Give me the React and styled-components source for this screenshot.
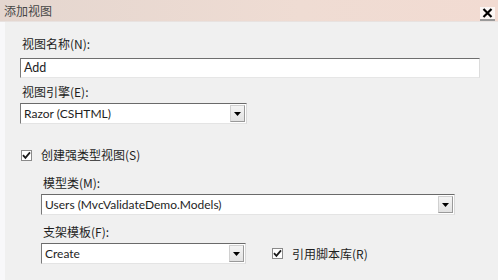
import React from "react";
import styled, { createGlobalStyle } from "styled-components";

const GlobalStyle = createGlobalStyle`
  html, body {
    margin: 0;
    padding: 0;
    background: #f0f0f0;
  }
  body {
    font-family: "Noto Sans CJK SC", "Noto Sans", sans-serif;
    font-size: 12px;
    color: #1e1e1e;
  }
`;

const ComboBox = ({ value, width }) => (
  <Combo $width={width}>
    <ComboText>{value}</ComboText>
    <ArrowButton>
      <svg width="7" height="4" viewBox="0 0 7 4">
        <path d="M0 0 H7 L3.5 4 Z" fill="#000" />
      </svg>
    </ArrowButton>
  </Combo>
);

const CheckBox = ({ label }) => (
  <CheckRow>
    <Box>
      <svg width="9" height="9" viewBox="0 0 9 9">
        <path d="M1 4.2 L3.4 6.8 L8 1.4" stroke="#1a1a1a" strokeWidth="1.8" fill="none" />
      </svg>
    </Box>
    <span>{label}</span>
  </CheckRow>
);

const App = () => {
  return (
    <Window>
      <GlobalStyle />
      <TitleBar>
        <Title>添加视图</Title>
        <CloseButton>
          <svg width="11" height="10" viewBox="0 0 11 10">
            <path d="M1.5 1 L9.5 9 M9.5 1 L1.5 9" stroke="#000" strokeWidth="2.2" />
          </svg>
        </CloseButton>
      </TitleBar>
      <Content>
        <Label $gap={1}>视图名称(N):</Label>
        <TextInput>Add</TextInput>
        <Label $gap={6}>视图引擎(E):</Label>
        <ComboBox value="Razor (CSHTML)" width={227} />
        <Spacer $h={23} />
        <CheckBox label="创建强类型视图(S)" />
        <Indented>
          <Label $gap={12}>模型类(M):</Label>
          <ComboBox value="Users (MvcValidateDemo.Models)" width={414} />
          <Label $gap={9}>支架模板(F):</Label>
          <BottomRow>
            <ComboBox value="Create" width={205} />
            <CheckBox label="引用脚本库(R)" />
          </BottomRow>
        </Indented>
      </Content>
    </Window>
  );
};

export default App;

const Window = styled.div`
  width: 498px;
  height: 280px;
  background: #f0f0f0;
  overflow: hidden;
  display: flex;
  flex-direction: column;
`;

const TitleBar = styled.div`
  height: 22px;
  flex: none;
  display: flex;
  align-items: center;
  justify-content: space-between;
  background: linear-gradient(to right, #e4d6cf, #efdcd3 60%, #f2dbd2);
  border-bottom: 1px solid #e8e2e0;
  box-sizing: border-box;
`;

const Title = styled.div`
  padding-left: 4px;
  font-size: 12px;
  color: #464646;
  line-height: 16px;
`;

const CloseButton = styled.div`
  width: 15px;
  height: 14px;
  margin: 7px 3px 0 0;
  display: flex;
  align-items: center;
  justify-content: center;
  background: #fbf6f4;
  border-bottom: 2px solid #9a9a9a;
  box-sizing: border-box;
`;

const Content = styled.div`
  flex: 1;
  border-left: 5px solid #f8f8fa;
  padding: 13px 0 0 15px;
  display: flex;
  flex-direction: column;
  align-items: flex-start;
`;

const Label = styled.div`
  height: 16px;
  line-height: 16px;
  margin-top: ${(p) => p.$gap || 0}px;
  margin-bottom: 3px;
  padding-left: 2px;
  white-space: nowrap;
`;

const TextInput = styled.div`
  width: 460px;
  height: 20px;
  box-sizing: border-box;
  margin-top: 3px;
  background: #fff;
  border: 1px solid #b5b5b5;
  border-top-color: #6e6e6e;
  border-left-color: #7a7a7a;
  border-right-color: #dcdcdc;
  border-bottom-color: #e6e6e6;
  padding-left: 3px;
  font-size: 12.5px;
  line-height: 18px;
  font-family: Lato, "Noto Sans", sans-serif;
`;

const Combo = styled.div`
  width: ${(p) => p.$width}px;
  height: 21px;
  box-sizing: border-box;
  background: #fff;
  border: 1px solid #c8c8c8;
  border-top-color: #6a6a6a;
  border-left-color: #7a7a7a;
  border-right-color: #d8d8d8;
  border-bottom-color: #e4e4e4;
  display: flex;
  align-items: stretch;
  flex: none;
`;

const ComboText = styled.div`
  flex: 1;
  padding-left: 3px;
  line-height: 19px;
  font-family: Lato, "Noto Sans", sans-serif;
  font-size: 12px;
  white-space: nowrap;
  overflow: hidden;
`;

const ArrowButton = styled.div`
  width: 15px;
  margin: 1px 1px 1px 0;
  display: flex;
  align-items: center;
  justify-content: center;
  background: linear-gradient(#f4f4f4, #e2e2e2);
  border: 1px solid #d0d0d0;
  border-right-color: #9a9a9a;
  border-bottom-color: #9a9a9a;
  box-sizing: border-box;
`;

const Spacer = styled.div`
  height: ${(p) => p.$h}px;
`;

const CheckRow = styled.div`
  display: flex;
  align-items: center;
  gap: 9px;
  height: 16px;
  line-height: 16px;
  padding-left: 1px;
  white-space: nowrap;
`;

const Box = styled.div`
  width: 11px;
  height: 11px;
  box-sizing: border-box;
  background: #fff;
  border: 1px solid #8a8a8a;
  display: flex;
  align-items: center;
  justify-content: center;
`;

const Indented = styled.div`
  padding-left: 21px;
  display: flex;
  flex-direction: column;
  align-items: flex-start;
`;

const BottomRow = styled.div`
  display: flex;
  align-items: center;
  gap: 25px;
`;
